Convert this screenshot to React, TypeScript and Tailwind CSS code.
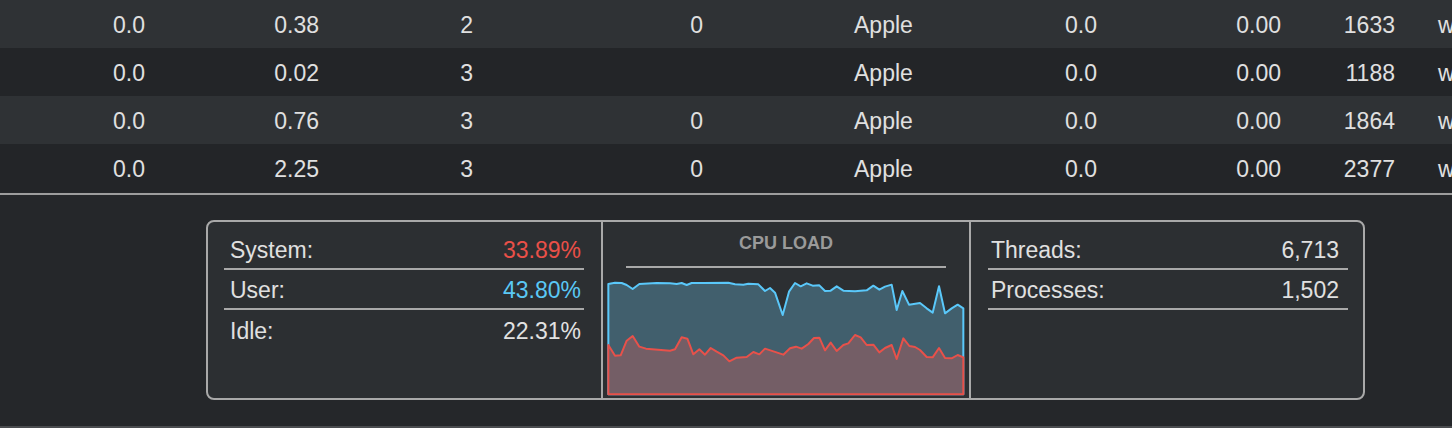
const rows = [
  ['0.0', '0.38', '2', '0', 'Apple', '0.0', '0.00', '1633', 'windowserver'],
  ['0.0', '0.02', '3', '', 'Apple', '0.0', '0.00', '1188', 'windowserver'],
  ['0.0', '0.76', '3', '0', 'Apple', '0.0', '0.00', '1864', 'windowserver'],
  ['0.0', '2.25', '3', '0', 'Apple', '0.0', '0.00', '2377', 'windowserver'],
]

// points traced in 3x chart coords (viewBox matches)
const userLine =
  '55,222 75,218 95,219 110,225 128,237 148,222 200,219 240,220 260,222 275,219 290,225 305,219 340,219 415,218 435,223 460,224 475,221 505,223 525,243 540,234 555,248 578,315 597,245 615,219 632,229 650,220 668,227 688,226 705,243 722,242 740,229 760,242 795,244 830,241 850,227 868,239 885,230 905,224 920,300 937,243 957,284 990,279 1010,295 1028,308 1047,229 1065,310 1085,295 1103,284 1120,295'
const systemLine =
  '55,405 75,437 92,436 110,392 128,378 148,410 168,416 240,422 255,418 275,382 292,386 310,433 328,418 345,434 362,414 380,425 400,436 418,454 440,443 470,441 490,426 508,433 525,416 580,434 600,415 618,410 635,416 655,402 672,384 688,383 705,421 722,398 740,423 760,405 775,400 795,375 812,382 830,405 850,404 868,427 885,414 905,405 920,447 940,385 958,408 975,411 990,420 1010,441 1028,442 1047,414 1065,444 1085,445 1103,435 1120,442'

function StatRow({ label, value, color }: { label: string; value: string; color?: string }) {
  return (
    <div className="flex h-[40px] items-center justify-between border-b-2 border-[#a9a9a9] pt-[3px] pl-[6px] pr-[3px]">
      <span>{label}</span>
      <span className={color ?? 'text-[#e2e2e2]'}>{value}</span>
    </div>
  )
}

export default function App() {
  return (
    <div
      className="w-[1452px] h-[428px] overflow-hidden bg-[#25272a] text-[23px] text-[#e0e0e0] flex flex-col"
      style={{ fontFamily: '"Liberation Sans", Arial, sans-serif' }}
    >
      <div>
        {rows.map((r, i) => (
          <div
            key={i}
            className={`flex h-12 items-center whitespace-nowrap pt-[2px] ${i % 2 === 0 ? 'bg-[#2f3235]' : 'bg-[#232528]'}`}
          >
            <div className="w-[145px] shrink-0 text-right">{r[0]}</div>
            <div className="w-[174px] shrink-0 text-right">{r[1]}</div>
            <div className="w-[154px] shrink-0 text-right">{r[2]}</div>
            <div className="w-[230px] shrink-0 text-right">{r[3]}</div>
            <div className="w-[247px] shrink-0 pl-[151px]">{r[4]}</div>
            <div className="w-[147px] shrink-0 text-right">{r[5]}</div>
            <div className="w-[184px] shrink-0 text-right">{r[6]}</div>
            <div className="w-[114px] shrink-0 text-right">{r[7]}</div>
            <div className="shrink-0 pl-[43px]">{r[8]}</div>
          </div>
        ))}
      </div>
      <div className="mt-px h-[2px] bg-[#9d9d9d]" />

      <div className="flex-1 pt-[25px] pl-[206px]">
        <div className="flex w-[1159px] h-[180px] rounded-lg border-2 border-[#a9a9a9] bg-[#2c2f32]">
          <div className="w-[393px] shrink-0 pt-2 pl-4 pr-[17px]">
            <StatRow label="System:" value="33.89%" color="text-[#ea5048]" />
            <StatRow label="User:" value="43.80%" color="text-[#5ac8f5]" />
            <div className="flex h-[40px] items-center justify-between pt-[3px] pl-[6px] pr-[3px]">
              <span>Idle:</span>
              <span className="text-[#e2e2e2]">22.31%</span>
            </div>
          </div>

          <div className="w-[370px] shrink-0 border-x-2 border-[#a9a9a9] pt-[10px]">
            <div className="h-[22px] text-center text-[18px] font-bold leading-[22px] text-[#9a9a9a]">CPU LOAD</div>
            <div className="mx-auto mt-[12px] h-[2px] w-[320px] bg-[#a9a9a9]" />
            <svg className="ml-[4px] mt-[12px] block" width="357.7" height="116" viewBox="51 210 1073 348">
              <polygon
                points={`${userLine} 1120,553 55,553`}
                fill="#415f6d"
                stroke="#5ac8fa"
                strokeWidth="6"
                strokeLinejoin="round"
              />
              <polygon
                points={`${systemLine} 1120,553 55,553`}
                fill="#745e66"
                stroke="#e8514a"
                strokeWidth="6"
                strokeLinejoin="round"
              />
            </svg>
          </div>

          <div className="flex-1 pt-2 pl-[17px] pr-[15px]">
            <div className="flex h-[40px] items-center justify-between border-b-2 border-[#a9a9a9] pt-[3px] pl-[3px] pr-[9px]">
              <span>Threads:</span>
              <span>6,713</span>
            </div>
            <div className="flex h-[40px] items-center justify-between border-b-2 border-[#a9a9a9] pt-[3px] pl-[3px] pr-[9px]">
              <span>Processes:</span>
              <span>1,502</span>
            </div>
          </div>
        </div>
      </div>
      <div className="h-[2px] bg-[#4a4c4f]" />
    </div>
  )
}
